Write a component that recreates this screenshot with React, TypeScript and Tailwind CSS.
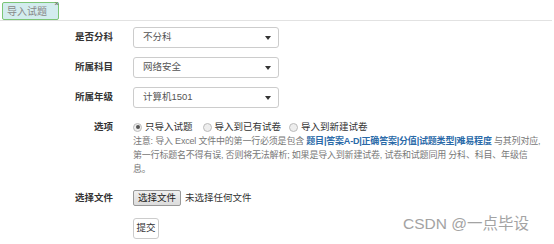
import React from "react";

const font = { fontFamily: '"Helvetica Neue", Arial, "Liberation Sans", "Noto Sans CJK SC", sans-serif' };

function Caret() {
  return <span className="w-0 h-0 border-l-[3px] border-r-[3px] border-t-[4px] border-l-transparent border-r-transparent border-t-[#333]" />;
}

function Select({ value }: { value: string }) {
  return (
    <div className="w-[146px] h-[21px] border border-[#ccc] rounded-[3px] bg-white flex items-center justify-between pl-[9px] pr-[7px] text-[9.5px] text-[#555]">
      <span>{value}</span>
      <Caret />
    </div>
  );
}

function Row({ label, children, className = "" }: { label: string; children: React.ReactNode; className?: string }) {
  return (
    <div className={"flex items-center " + className}>
      <div className="w-[114px] text-right pr-[1px] font-bold text-[9.5px] text-[#333]">{label}</div>
      <div className="ml-[19px]">{children}</div>
    </div>
  );
}

function Radio({ checked }: { checked?: boolean }) {
  return (
    <span className="w-[9px] h-[9px] rounded-full border border-[#bbb] bg-[#eee] flex items-center justify-center">
      {checked && <span className="w-[4px] h-[4px] rounded-full bg-[#555]" />}
    </span>
  );
}

export default function App() {
  return (
    <div className="relative w-[554px] h-[244px] bg-white overflow-hidden" style={font}>
      <div className="h-[21px] border-b border-[#e2e2e2] mr-[2px] flex items-end pl-[2px]">
        <div className="relative w-[57px] h-[18px] bg-[#d3ecee] border border-[#7cc576] rounded-[2px] flex items-center pl-[4px] text-[10px] text-[#888]">
          导入试题
          <span className="absolute right-[-1px] top-[-3px] text-[8px] leading-none text-[#666]">×</span>
        </div>
      </div>

      <div className="flex flex-col">
        <Row label="是否分科" className="mt-[6px]"><Select value="不分科" /></Row>
        <Row label="所属科目" className="mt-[9px]"><Select value="网络安全" /></Row>
        <Row label="所属年级" className="mt-[9px]"><Select value="计算机1501" /></Row>

        <Row label="选项" className="mt-[12px] h-[14px]">
          <div className="flex items-center text-[9.5px] text-[#333]">
            <Radio checked />
            <span className="ml-[3px]">只导入试题</span>
            <span className="ml-[10px]"><Radio /></span>
            <span className="ml-[3px]">导入到已有试卷</span>
            <span className="ml-[8px]"><Radio /></span>
            <span className="ml-[3px]">导入到新建试卷</span>
          </div>
        </Row>
        <div className="ml-[133px] w-[418px] text-[9px] leading-[14px] text-[#777] tracking-[-0.2px] whitespace-nowrap">
          注意: 导入 Excel 文件中的第一行必须是包含 <b className="text-[#2a6aa8]">题目|答案A-D|正确答案|分值|试题类型|难易程度</b> 与其列对应,
          <br />
          第一行标题名不得有误, 否则将无法解析; 如果是导入到新建试卷, 试卷和试题同用 分科、科目、年级信
          <br />
          息。
        </div>

        <Row label="选择文件" className="mt-[14px]">
          <div className="flex items-center text-[9.5px] text-[#333]">
            <span className="h-[16px] px-[4px] flex items-center border border-[#999] rounded-[2px] bg-gradient-to-b from-[#f0f0f0] to-[#dcdcdc] text-[#222]">选择文件</span>
            <span className="ml-[4px]">未选择任何文件</span>
          </div>
        </Row>
        <div className="ml-[133px] mt-[12px] w-[26px] h-[21px] border border-[#ccc] rounded-[3px] flex items-center justify-center text-[9.5px] text-[#333]">
          提交
        </div>
      </div>

      <div className="absolute left-[403px] top-[214px] text-[15.5px] leading-[20px] text-[#a3a3a3]" style={{ fontFamily: 'Arial, "Liberation Sans", "Noto Sans CJK SC", sans-serif' }}>
        CSDN @一点毕设
      </div>
    </div>
  );
}
